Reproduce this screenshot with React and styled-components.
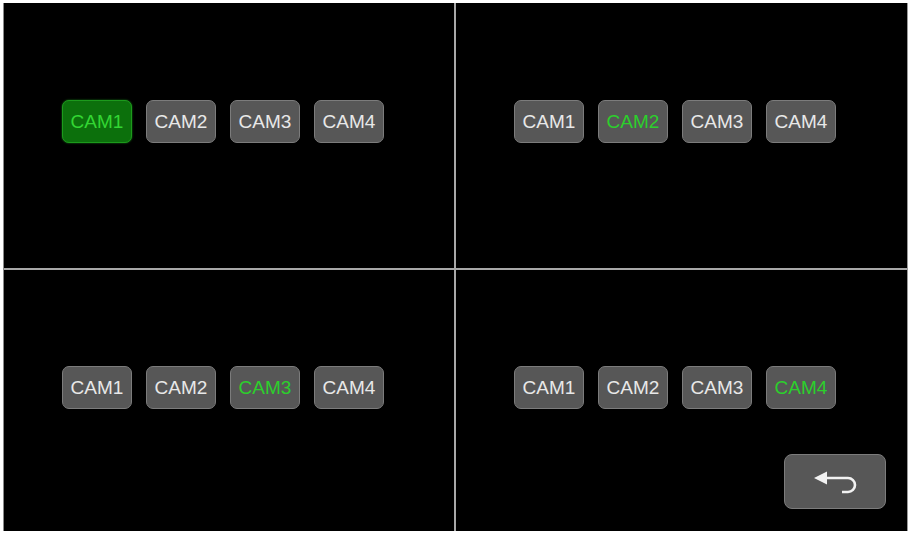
import React, { useState } from 'react';
import styled, { createGlobalStyle, css } from 'styled-components';

const GlobalStyle = createGlobalStyle`
  html, body {
    margin: 0;
    padding: 0;
    background: #ffffff;
  }
  body {
    font-family: "Liberation Sans", Arial, sans-serif;
  }
`;

const quads = [
  { id: 'tl', active: 0, glow: true },
  { id: 'tr', active: 1 },
  { id: 'bl', active: 2 },
  { id: 'br', active: 3, back: true },
];

const App = () => {
  const [selected, setSelected] = useState(quads.map(q => q.active));

  const pick = (qi, ci) => {
    const next = [...selected];
    next[qi] = ci;
    setSelected(next);
  };

  return (
    <>
      <GlobalStyle />
      <Frame>
        {quads.map((q, qi) => (
          <Cell key={q.id} bottom={qi > 1}>
            <Row>
              {['CAM1', 'CAM2', 'CAM3', 'CAM4'].map((name, ci) => (
                <CamButton
                  key={name}
                  active={selected[qi] === ci}
                  glow={q.glow && selected[qi] === ci}
                  onClick={() => pick(qi, ci)}
                >
                  {name}
                </CamButton>
              ))}
            </Row>
            {q.back && (
              <BackButton>
                <svg width="44" height="24" viewBox="0 0 44 24">
                  <polygon points="1,8 14,1.5 14,14.5" fill="#f2f2f2" />
                  <path
                    d="M13 8 H35 A7 7 0 0 1 35 22 H29"
                    fill="none"
                    stroke="#f2f2f2"
                    strokeWidth="2.6"
                  />
                </svg>
              </BackButton>
            )}
          </Cell>
        ))}
      </Frame>
    </>
  );
};

const Frame = styled.div`
  box-sizing: border-box;
  margin: 3px 0 0 3px;
  width: 905px;
  height: 528px;
  display: grid;
  grid-template-columns: 450px 451px;
  grid-template-rows: 265px 261px;
  gap: 2px;
  background: #a8a8a8;
  border-left: 1px solid #8a8a8a;
  border-right: 1px solid #9a9a9a;
`;

const Cell = styled.div`
  box-sizing: border-box;
  background: #000000;
  display: flex;
  flex-direction: column;
  padding: ${p => (p.bottom ? '96px' : '97px')} 21px 22px 58px;
`;

const Row = styled.div`
  display: flex;
  gap: 14px;
`;

const CamButton = styled.button`
  box-sizing: border-box;
  width: 70px;
  height: 43px;
  padding: 0;
  border-radius: 7px;
  border: 1px solid #7c7c7c;
  background: #575757;
  color: #e8e8e8;
  font-family: "Liberation Sans", Arial, sans-serif;
  font-size: 19px;
  cursor: pointer;
  ${p => p.active && css`
    color: #2ccf2c;
  `}
  ${p => p.glow && css`
    background: #0c700c;
    border-color: #1c9a1c;
    box-shadow: 0 0 2px #1a8a1a;
    color: #33d633;
  `}
`;

const BackButton = styled.button`
  box-sizing: border-box;
  margin-top: auto;
  align-self: flex-end;
  width: 102px;
  height: 55px;
  padding: 0;
  border-radius: 8px;
  border: 1px solid #7c7c7c;
  background: #575757;
  display: flex;
  align-items: center;
  justify-content: center;
  cursor: pointer;
`;

export default App;
